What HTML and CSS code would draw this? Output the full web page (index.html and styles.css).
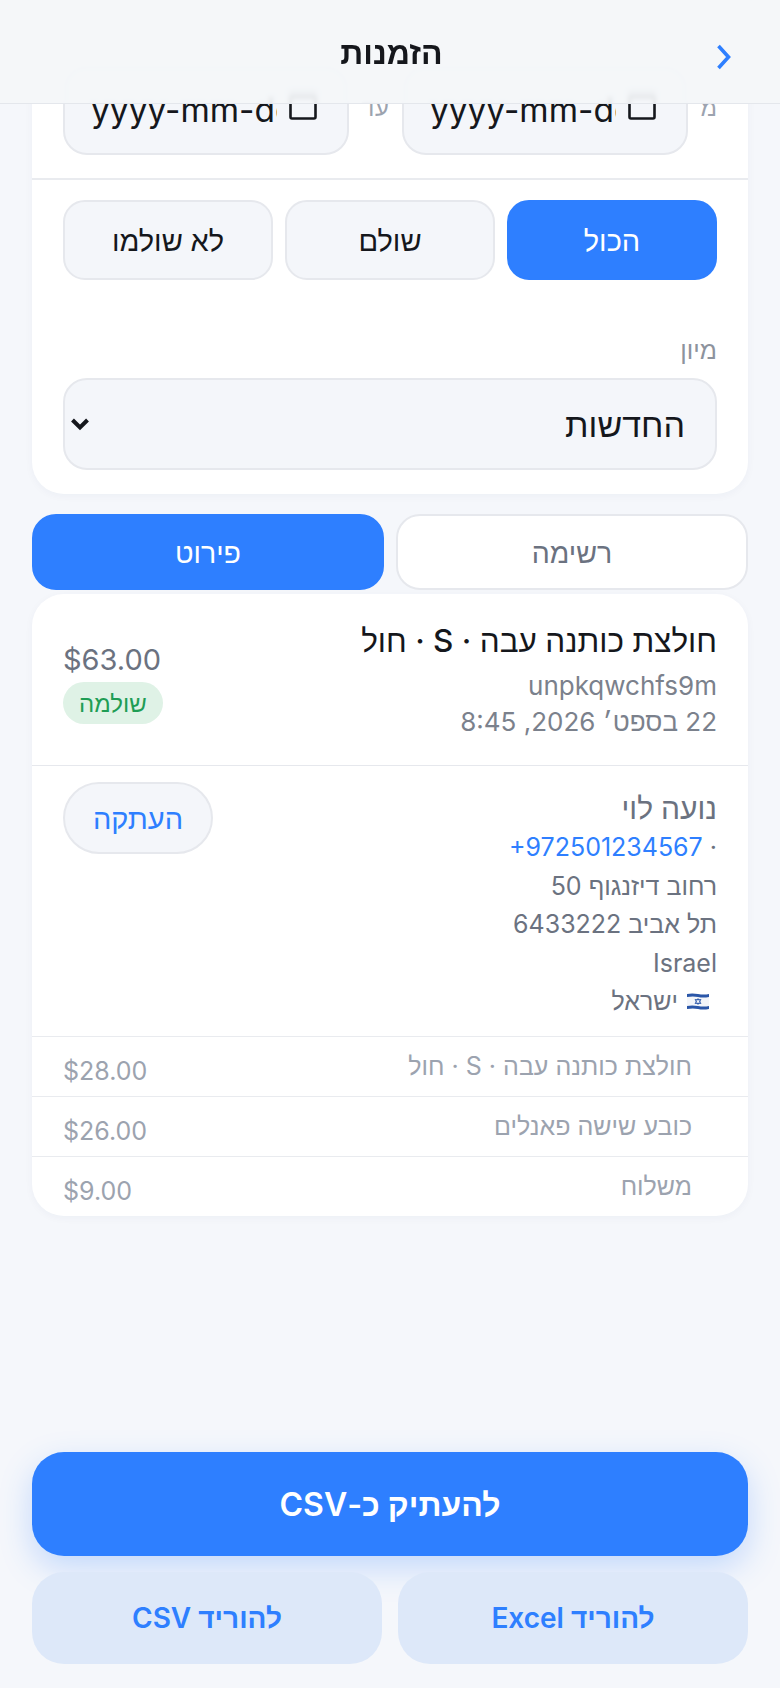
FILE: index.html
```html
<!DOCTYPE html>
<html lang="he" dir="rtl">

<head>
    <meta charset="UTF-8">
    <meta name="viewport" content="width=device-width, initial-scale=1.0">
    <title>הזמנות</title>
    <link rel="stylesheet" href="styles.css">
</head>

<body>

    <header class="topbar">
        <svg class="back" width="18" height="26" viewBox="0 0 18 26">
            <path d="M3.5 2 L13.5 13 L3.5 24" fill="none" stroke="#2e7fff" stroke-width="3.6" />
        </svg>
        <div class="topbar-title">הזמנות</div>
    </header>

    <main class="content">
        <section class="card filters">
            <div class="dates">
                <span class="date-label">מ</span>
                <div class="date-input">
                    <span class="date-text">yyyy-mm-dd</span>
                    <svg class="cal" width="28" height="30" viewBox="0 0 28 30">
                        <rect x="0" y="0" width="28" height="9" rx="3" fill="#b4b8c0" />
                        <rect x="1.5" y="7" width="25" height="21.5" rx="1.5" fill="none" stroke="#15171c" stroke-width="2.6" />
                    </svg>
                </div>
                <span class="date-label">עד</span>
                <div class="date-input">
                    <span class="date-text">yyyy-mm-dd</span>
                    <svg class="cal" width="28" height="30" viewBox="0 0 28 30">
                        <rect x="0" y="0" width="28" height="9" rx="3" fill="#b4b8c0" />
                        <rect x="1.5" y="7" width="25" height="21.5" rx="1.5" fill="none" stroke="#15171c" stroke-width="2.6" />
                    </svg>
                </div>
            </div>

            <div class="status-row">
                <div class="status active">הכול</div>
                <div class="status">שולם</div>
                <div class="status">לא שולמו</div>
            </div>

            <div class="sort">
                <div class="sort-label">מיון</div>
                <div class="select">
                    <span>החדשות</span>
                    <svg width="20" height="14" viewBox="0 0 20 14">
                        <path d="M2.5 3 L10 10.5 L17.5 3" fill="none" stroke="#15171c" stroke-width="4" />
                    </svg>
                </div>
            </div>
        </section>

        <div class="tabs">
            <div class="tab">רשימה</div>
            <div class="tab active">פירוט</div>
        </div>

        <section class="card order">
            <div class="order-head">
                <div>
                    <div class="order-title">חולצת כותנה עבה · S · חול</div>
                    <div class="order-meta">unpkqwchfs9m</div>
                    <div class="order-meta">22 בספט׳ 2026, 8:45</div>
                </div>
                <div class="order-side">
                    <div class="order-price">$63.00</div>
                    <div class="badge">שולמה</div>
                </div>
            </div>

            <div class="customer">
                <div class="customer-info">
                    <div class="customer-name">נועה לוי</div>
                    <div class="customer-line">· <span class="phone" dir="ltr">+972501234567</span></div>
                    <div class="customer-line">רחוב דיזנגוף 50</div>
                    <div class="customer-line">תל אביב 6433222</div>
                    <div class="customer-line">Israel</div>
                    <div class="customer-line country">
                        <svg class="flag" width="22" height="17" viewBox="0 0 22 17">
                            <path d="M0 1 Q5 0 11 1 T22 1 V16 Q16 17 11 16 T0 16 Z" fill="#f3f5f9" />
                            <path d="M0 1 Q5 0 11 1 T22 1 V4 Q16 5 11 4 T0 4 Z" fill="#2a56a8" />
                            <path d="M0 13 Q5 12 11 13 T22 13 V16 Q16 17 11 16 T0 16 Z" fill="#2a56a8" />
                            <path d="M11 5.5 L14 10.5 H8 Z M11 11.5 L8 6.5 H14 Z" fill="none" stroke="#2a56a8" stroke-width="0.8" />
                        </svg>
                        <span>ישראל</span>
                    </div>
                </div>
                <div class="copy-btn">העתקה</div>
            </div>

            <div class="line-item">
                <span class="line-name">חולצת כותנה עבה · S · חול</span>
                <span class="line-price">$28.00</span>
            </div>
            <div class="line-item">
                <span class="line-name">כובע שישה פאנלים</span>
                <span class="line-price">$26.00</span>
            </div>
            <div class="line-item">
                <span class="line-name">משלוח</span>
                <span class="line-price">$9.00</span>
            </div>
        </section>
    </main>

    <footer class="actions">
        <div class="btn-main">להעתיק כ-CSV</div>
        <div class="btn-row">
            <div class="btn-soft">להוריד Excel</div>
            <div class="btn-soft">להוריד CSV</div>
        </div>
    </footer>

</body>

</html>
```

FILE: styles.css
```css
* {
    box-sizing: border-box;
}

html,
body {
    margin: 0;
    height: 1688px;
    overflow: hidden;
}

body {
    position: relative;
    display: flex;
    flex-direction: column;
    font-family: Inter, "Liberation Sans", sans-serif;
    color: #15171c;
    background-color: #f5f7fb;
}

/* header sits over the scrolled page */
.topbar {
    position: absolute;
    top: 0;
    left: 0;
    right: 0;
    z-index: 2;
    height: 104px;
    display: flex;
    align-items: center;
    justify-content: center;
    background-color: rgba(244, 246, 249, 0.92);
    backdrop-filter: blur(2px);
    border-bottom: 1px solid #e4e7ec;
}

.back {
    position: absolute;
    top: 44px;
    right: 47px;
}

.topbar-title {
    font-size: 32px;
    font-weight: 700;
    margin-top: 2px;
    padding-left: 3px;
}

.content {
    padding: 0 32px;
}

.card {
    background-color: #fff;
    border-radius: 32px;
    box-shadow: 0 2px 8px rgba(30, 50, 90, 0.04);
}

/* the page is scrolled, top of this card is out of view */
.filters {
    margin-top: -40px;
    padding-top: 105px;
    padding-bottom: 24px;
}

.dates {
    display: flex;
    align-items: center;
    gap: 13px;
    padding: 0 31px 23px;
    border-bottom: 2px solid #e9ebef;
}

.date-label {
    font-size: 24px;
    color: #9ca3af;
    margin-top: -6px;
}

.date-input {
    flex: 1;
    min-width: 0;
    height: 90px;
    display: flex;
    flex-direction: row-reverse;
    align-items: center;
    justify-content: space-between;
    padding: 0 30px 6px 26px;
    background-color: #f4f6fa;
    border: 2px solid #e6e8ed;
    border-radius: 24px;
}

.date-text {
    direction: ltr;
    width: 186px;
    margin-top: 6px;
    overflow: hidden;
    white-space: nowrap;
    font-size: 33.5px;
    line-height: 40px;
}

.cal {
    margin-top: -5px;
}

.status-row {
    display: flex;
    gap: 12px;
    padding: 20px 31px 0;
}

.status {
    flex: 1;
    height: 80px;
    display: flex;
    align-items: center;
    justify-content: center;
    font-size: 29px;
    font-weight: 500;
    background-color: #f4f6fa;
    border: 2px solid #e6e8ed;
    border-radius: 22px;
}

.status.active {
    color: #fff;
    background-color: #2e7fff;
    border-color: #2e7fff;
}

.sort {
    padding: 55px 31px 0;
}

.sort-label {
    font-size: 25px;
    line-height: 30px;
    color: #8d939d;
    margin-bottom: 13px;
}

.select {
    height: 92px;
    display: flex;
    align-items: center;
    justify-content: space-between;
    padding: 0 30px 0 5px;
    font-size: 34px;
    background-color: #f4f6fa;
    border: 2px solid #e6e8ed;
    border-radius: 24px;
}

.tabs {
    display: flex;
    gap: 12px;
    margin-top: 20px;
}

.tab {
    flex: 1;
    height: 76px;
    display: flex;
    align-items: center;
    justify-content: center;
    font-size: 28.5px;
    font-weight: 500;
    color: #6b7280;
    background-color: #fff;
    border: 2px solid #e6e8ed;
    border-radius: 24px;
}

.tab.active {
    color: #fff;
    background-color: #2e7fff;
    border-color: #2e7fff;
}

.order {
    margin-top: 4px;
    overflow: hidden;
}

.order-head {
    display: flex;
    align-items: center;
    justify-content: space-between;
    padding: 27px 31px 25px;
}

.order-title {
    font-size: 31.5px;
    font-weight: 500;
    line-height: 40px;
    margin-bottom: 7px;
}

.order-meta {
    font-size: 26px;
    line-height: 36px;
    color: #7b818c;
}

.order-side {
    display: flex;
    flex-direction: column;
    align-items: flex-end;
    gap: 4px;
    margin-top: 5px;
}

.order-price {
    font-size: 29px;
    line-height: 36px;
    color: #6b7280;
}

.badge {
    height: 42px;
    padding: 0 16px;
    display: flex;
    align-items: center;
    font-size: 24px;
    font-weight: 500;
    color: #1f9d55;
    background-color: #dff2e6;
    border-radius: 21px;
}

.customer {
    display: flex;
    justify-content: space-between;
    align-items: flex-start;
    padding: 16px 31px 15px;
    border-top: 1px solid #e6e8ed;
}

.customer-info {
    padding-top: 6px;
}

.customer-name {
    font-size: 30px;
    font-weight: 500;
    line-height: 40px;
    color: #6b7280;
}

.customer-line {
    font-size: 25px;
    line-height: 38.5px;
    color: #6b7280;
}

.phone {
    color: #2e7fff;
}

.country {
    display: flex;
    align-items: center;
    gap: 9px;
    padding-right: 8px;
}

.copy-btn {
    width: 150px;
    height: 72px;
    display: flex;
    align-items: center;
    justify-content: center;
    font-size: 29px;
    font-weight: 500;
    color: #2e7fff;
    background-color: #f4f6fa;
    border: 2px solid #e6e8ed;
    border-radius: 36px;
}

.line-item {
    height: 60px;
    display: flex;
    align-items: center;
    justify-content: space-between;
    padding: 0 31px 0 31px;
    border-top: 1px solid #e9ebef;
    font-size: 25px;
    color: #9ca3af;
}

.line-name {
    padding-right: 25px;
}

.line-price {
    margin-top: 9px;
}

.actions {
    margin-top: auto;
    padding: 0 32px 24px;
    display: flex;
    flex-direction: column;
    gap: 16px;
}

.btn-main {
    height: 104px;
    display: flex;
    align-items: center;
    justify-content: center;
    font-size: 32px;
    font-weight: 600;
    color: #fff;
    background-color: #2e7fff;
    border-radius: 32px;
    box-shadow: 0 12px 32px rgba(46, 127, 255, 0.25);
}

.btn-row {
    display: flex;
    gap: 16px;
}

.btn-soft {
    flex: 1;
    height: 92px;
    display: flex;
    align-items: center;
    justify-content: center;
    font-size: 28px;
    font-weight: 600;
    color: #2e7fff;
    background-color: #dde8f9;
    border-radius: 32px;
}
```
